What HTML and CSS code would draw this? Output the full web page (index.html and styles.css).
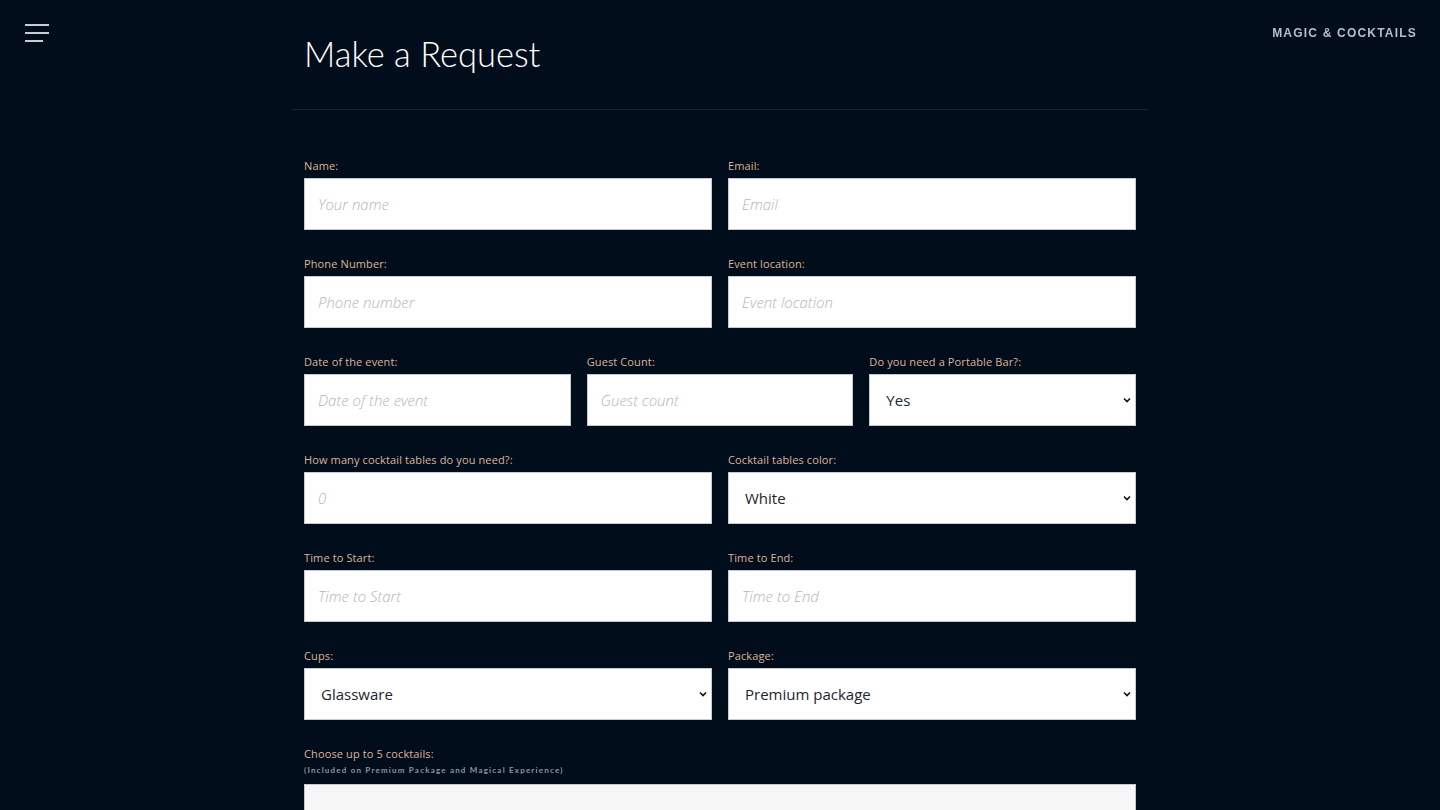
FILE: index.html
```html
<!DOCTYPE html>
<html lang="en">

<head>
    <meta charset="UTF-8">
    <meta name="viewport" content="width=device-width, initial-scale=1.0">
    <title>Make a Request</title>
    <link rel="stylesheet" href="styles.css">
</head>

<body>
    <!-- Menu button and brand sit over the page -->
    <button class="menu-toggle" type="button" aria-label="Menu">
        <span></span>
        <span></span>
        <span class="short"></span>
    </button>
    <a class="brand" href="#">MAGIC &amp; COCKTAILS</a>

    <main class="page">
        <h1 class="page-title">Make a Request</h1>

        <form class="request-form">
            <div class="row">
                <div class="field">
                    <label for="name">Name:</label>
                    <input type="text" id="name" placeholder="Your name">
                </div>
                <div class="field">
                    <label for="email">Email:</label>
                    <input type="email" id="email" placeholder="Email">
                </div>
            </div>

            <div class="row">
                <div class="field">
                    <label for="phone">Phone Number:</label>
                    <input type="text" id="phone" placeholder="Phone number">
                </div>
                <div class="field">
                    <label for="location">Event location:</label>
                    <input type="text" id="location" placeholder="Event location">
                </div>
            </div>

            <div class="row three">
                <div class="field">
                    <label for="date">Date of the event:</label>
                    <input type="text" id="date" placeholder="Date of the event">
                </div>
                <div class="field">
                    <label for="guests">Guest Count:</label>
                    <input type="text" id="guests" placeholder="Guest count">
                </div>
                <div class="field">
                    <label for="bar">Do you need a Portable Bar?:</label>
                    <select id="bar">
                        <option>Yes</option>
                        <option>No</option>
                    </select>
                </div>
            </div>

            <div class="row">
                <div class="field">
                    <label for="tables">How many cocktail tables do you need?:</label>
                    <input type="text" id="tables" placeholder="0">
                </div>
                <div class="field">
                    <label for="tableColor">Cocktail tables color:</label>
                    <select id="tableColor">
                        <option>White</option>
                        <option>Black</option>
                    </select>
                </div>
            </div>

            <div class="row">
                <div class="field">
                    <label for="start">Time to Start:</label>
                    <input type="text" id="start" placeholder="Time to Start">
                </div>
                <div class="field">
                    <label for="end">Time to End:</label>
                    <input type="text" id="end" placeholder="Time to End">
                </div>
            </div>

            <div class="row">
                <div class="field">
                    <label for="cups">Cups:</label>
                    <select id="cups">
                        <option>Glassware</option>
                        <option>Plastic cups</option>
                    </select>
                </div>
                <div class="field">
                    <label for="package">Package:</label>
                    <select id="package">
                        <option>Premium package</option>
                        <option>Magical Experience</option>
                    </select>
                </div>
            </div>

            <div class="field">
                <label for="cocktails">Choose up to 5 cocktails:</label>
                <small class="hint">(Included on Premium Package and Magical Experience)</small>
                <div class="choice-box" id="cocktails"></div>
            </div>
        </form>
    </main>
</body>

</html>
```

FILE: styles.css
```css
body {
    margin: 0;
    background-color: #020d1c;
    font-family: 'Lato', 'Open Sans', sans-serif;
    color: #fff;
}

.menu-toggle {
    position: fixed;
    top: 24px;
    left: 25px;
    width: 24px;
    padding: 0;
    border: none;
    background: none;
    cursor: pointer;
}

.menu-toggle span {
    display: block;
    width: 24px;
    height: 2px;
    margin-bottom: 6px;
    background-color: #c8cdd5;
}

.menu-toggle span.short {
    width: 18px;
}

.brand {
    position: fixed;
    top: 26px;
    right: 23px;
    color: #b9bec6;
    font-family: 'Liberation Sans', Arial, sans-serif;
    font-size: 12px;
    font-weight: bold;
    letter-spacing: 1.2px;
    text-decoration: none;
}

.page {
    width: 856px;
    margin: 0 auto;
}

.page-title {
    margin: 0;
    padding: 32px 12px 33px;
    font-size: 34.5px;
    font-weight: 300;
    line-height: 44px;
    color: #fff;
    border-bottom: 1px solid #1a2432;
}

.request-form {
    padding: 48px 12px 0;
}

.row {
    display: grid;
    grid-template-columns: 1fr 1fr;
    gap: 16px;
}

.row.three {
    grid-template-columns: 1fr 1fr 1fr;
}

.field {
    display: flex;
    flex-direction: column;
    margin-bottom: 26px;
}

label {
    font-family: 'Open Sans', sans-serif;
    font-size: 11px;
    line-height: 15px;
    letter-spacing: 0.12px;
    margin-bottom: 5px;
    color: #dcb497;
}

input,
select {
    height: 52px;
    box-sizing: border-box;
    border: 1px solid #c4cad3;
    border-radius: 0;
    background-color: #fff;
    font-family: 'Open Sans', sans-serif;
    font-size: 15px;
    color: #1c2530;
}

input {
    padding: 0 13px;
}

input::placeholder {
    color: #b5b5b5;
    font-style: italic;
    font-weight: 300;
}

select {
    appearance: none;
    padding: 0 16px;
    background-image: url("data:image/svg+xml,%3Csvg xmlns='http://www.w3.org/2000/svg' width='8' height='6' viewBox='0 0 8 6'%3E%3Cpath d='M1 1.5l3 3 3-3' fill='none' stroke='%23111' stroke-width='1.6'/%3E%3C/svg%3E");
    background-repeat: no-repeat;
    background-position: right 4px center;
}

.hint {
    margin: -1px 0 9px;
    font-size: 8px;
    font-weight: bold;
    letter-spacing: 1.2px;
    color: #8e939b;
}

.choice-box {
    height: 120px;
    background-color: #f7f7f7;
    border: 1px solid #c4cad3;
}
```
